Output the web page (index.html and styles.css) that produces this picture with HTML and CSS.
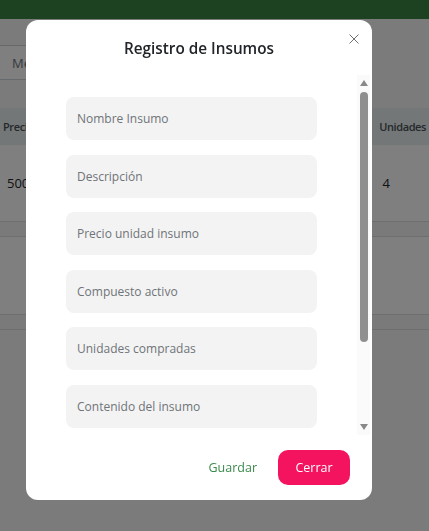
FILE: index.html
```html
<!DOCTYPE html>
<html lang="es">
<head>
<meta charset="utf-8">
<title>Registro de Insumos</title>
<link rel="stylesheet" href="styles.css">
</head>
<body>
<div class="page">
  <header class="navbar"></header>
  <main class="content">
    <div class="search"><span class="search-text">Medicamento</span></div>
    <div class="table">
      <div class="thead">
        <span class="th th-first">Precio unidad</span>
        <span class="th th-last">Unidades</span>
      </div>
      <div class="trow">
        <span class="td td-first">5000</span>
        <span class="td td-last">4</span>
      </div>
      <div class="band"></div>
      <div class="trow trow-empty"></div>
      <div class="band"></div>
    </div>
  </main>
</div>

<div class="backdrop">
  <div class="modal">
    <div class="modal-header">
      <h1 class="modal-title">Registro de Insumos</h1>
      <button class="btn-close" type="button" aria-label="Cerrar">
        <svg width="10" height="10" viewBox="0 0 10 10"><path d="M0.5 0.5 L9.5 9.5 M9.5 0.5 L0.5 9.5" stroke="#707070" stroke-width="1" fill="none"/></svg>
      </button>
    </div>
    <div class="modal-body">
      <div class="fields">
        <input class="field" type="text" placeholder="Nombre Insumo">
        <input class="field" type="text" placeholder="Descripción">
        <input class="field" type="text" placeholder="Precio unidad insumo">
        <input class="field" type="text" placeholder="Compuesto activo">
        <input class="field" type="text" placeholder="Unidades compradas">
        <input class="field" type="text" placeholder="Contenido del insumo">
        <input class="field" type="text" placeholder="Fecha de vencimiento">
        <input class="field" type="text" placeholder="Proveedor">
      </div>
      <div class="scrollbar" aria-hidden="true">
        <span class="sb-arrow sb-up"></span>
        <div class="sb-track"><span class="sb-thumb"></span></div>
        <span class="sb-arrow sb-down"></span>
      </div>
    </div>
    <div class="modal-footer">
      <button class="btn btn-save" type="button">Guardar</button>
      <button class="btn btn-closebtn" type="button">Cerrar</button>
    </div>
  </div>
</div>
</body>
</html>
```

FILE: styles.css
```css
* { box-sizing: border-box; }

html, body {
  margin: 0;
  padding: 0;
  height: 100%;
  overflow: hidden;
}

body {
  background: #f6f6f6;
  font-family: "Open Sans", "Noto Sans", sans-serif;
  color: #212529;
}

.page {
  display: flex;
  flex-direction: column;
}

.navbar {
  height: 19px;
  background: #388444;
}

.content {
  display: flex;
  flex-direction: column;
  padding-top: 26px;
}

.search {
  height: 35px;
  margin-left: -6px;
  width: 300px;
  border: 1px solid #cfd4d8;
  border-radius: 6px;
  background: #ffffff;
  display: flex;
  align-items: center;
  padding-left: 17px;
}

.search-text {
  font-size: 13px;
  color: #6c757d;
}

.table {
  margin-top: 28px;
  display: flex;
  flex-direction: column;
}

.thead {
  height: 37px;
  background: #e8eeee;
  display: flex;
  align-items: center;
  justify-content: space-between;
  font-size: 11px;
  font-weight: 600;
  letter-spacing: -0.4px;
  color: #4a5256;
}

.th-first { padding-left: 3px; white-space: nowrap; }
.th-last { padding-right: 3px; }

.trow {
  height: 77px;
  background: #ffffff;
  border-bottom: 1px solid #dcdcdc;
  display: flex;
  align-items: center;
  justify-content: space-between;
  font-size: 13px;
  color: #212529;
}

.td-first { padding-left: 7px; white-space: nowrap; }
.td-last { padding-right: 39px; }

.band {
  height: 15px;
  background: #f4f4f4;
  border-bottom: 1px solid #dcdcdc;
}

.trow-empty { height: 78px; }

/* Modal */
.backdrop {
  position: fixed;
  inset: 0;
  background: rgba(0, 0, 0, 0.5);
  display: flex;
  align-items: flex-start;
  padding: 20px 57px 0 26px;
}

.modal {
  width: 346px;
  height: 480px;
  background: #ffffff;
  border-radius: 12px;
  display: flex;
  flex-direction: column;
  overflow: hidden;
}

.modal-header {
  height: 55px;
  display: flex;
  align-items: flex-start;
  justify-content: center;
  padding-top: 17px;
  position: relative;
}

.modal-title {
  margin: 0;
  font-size: 15.3px;
  font-weight: 600;
  line-height: 22px;
  color: #212529;
}

.btn-close {
  position: absolute;
  top: 14px;
  right: 13px;
  width: 10px;
  height: 10px;
  padding: 0;
  border: 0;
  background: transparent;
  display: flex;
}

.modal-body {
  height: 360px;
  margin-right: 2px;
  display: flex;
}

.fields {
  flex: 1;
  min-width: 0;
  overflow-y: auto;
  scrollbar-width: none;
  padding: 22px 40px 4px 40px;
  display: flex;
  flex-direction: column;
  gap: 14.6px;
}

.scrollbar {
  width: 13px;
  background: #fafafa;
  display: flex;
  flex-direction: column;
}

.sb-arrow {
  height: 15px;
  display: flex;
  align-items: center;
  justify-content: center;
}

.sb-arrow::before {
  content: "";
  width: 0;
  height: 0;
  border-left: 4.5px solid transparent;
  border-right: 4.5px solid transparent;
  margin-left: 1px;
}

.sb-up::before { border-bottom: 6px solid #888888; margin-top: 1px; }
.sb-down::before { border-top: 6px solid #888888; margin-bottom: 1px; }

.sb-track {
  flex: 1;
  padding: 2px 2px 0 3px;
}

.sb-thumb {
  display: block;
  height: 250px;
  background: #8f8f8f;
  border-radius: 4px;
}

.field {
  flex: 0 0 43px;
  height: 43px;
  width: 100%;
  border: 0;
  border-radius: 8px;
  background: #f3f3f3;
  padding: 0 11px;
  font-family: "Open Sans", "Noto Sans", sans-serif;
  font-size: 12px;
  color: #212529;
  outline: none;
}

.field::placeholder {
  color: #6f7478;
}

.modal-footer {
  flex: 1;
  display: flex;
  align-items: center;
  justify-content: flex-end;
  gap: 11px;
  padding: 0 22px 0 0;
}

.btn {
  font-family: "Open Sans", "Noto Sans", sans-serif;
  font-size: 12.5px;
  height: 35px;
  border: 0;
  border-radius: 10px;
  cursor: pointer;
}

.btn-save {
  background: transparent;
  color: #3b8a4c;
  padding: 0 10px;
}

.btn-closebtn {
  background: #f3135f;
  color: #ffffff;
  width: 72px;
  padding: 0;
}
```
